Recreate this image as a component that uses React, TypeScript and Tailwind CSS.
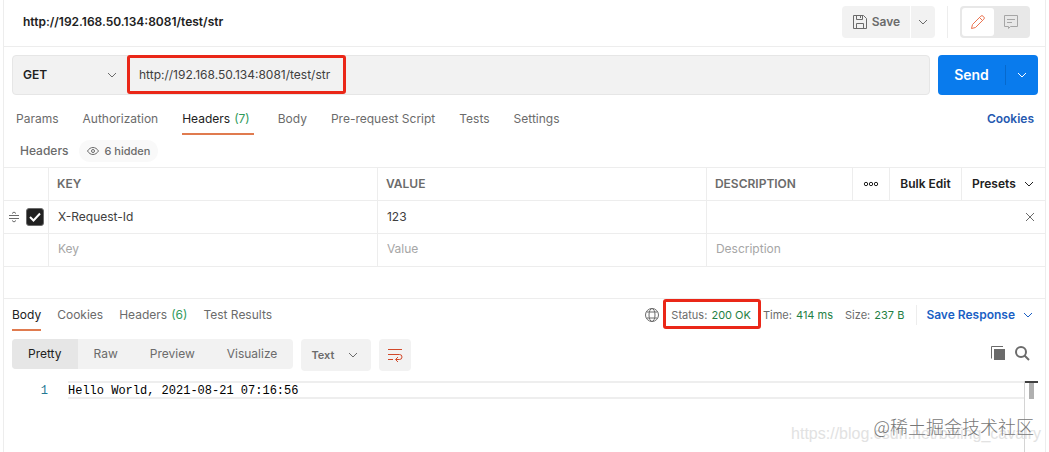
import { useState } from 'react';
import type { ReactNode } from 'react';

type Tab = { label: string; count?: number };

const requestTabs: Tab[] = [
  { label: 'Params' },
  { label: 'Authorization' },
  { label: 'Headers', count: 7 },
  { label: 'Body' },
  { label: 'Pre-request Script' },
  { label: 'Tests' },
  { label: 'Settings' },
];

const responseTabs: Tab[] = [
  { label: 'Body' },
  { label: 'Cookies' },
  { label: 'Headers', count: 6 },
  { label: 'Test Results' },
];

const viewModes = ['Pretty', 'Raw', 'Preview', 'Visualize'];

function Chevron({ className = '' }: { className?: string }) {
  return (
    <svg className={`h-[10px] w-[10px] ${className}`} viewBox="0 0 10 10" fill="none" stroke="currentColor" aria-hidden="true">
      <path d="M1 3l4 4 4-4" />
    </svg>
  );
}

/* Red frame around an element worth pointing at */
function Highlight({ className }: { className: string }) {
  return <div className={`pointer-events-none absolute rounded-[3px] border-3 border-[#ea2718] ${className}`} />;
}

function TabButton({ tab, active, className, onClick }: { tab: Tab; active: boolean; className: string; onClick: () => void }) {
  return (
    <button
      type="button"
      onClick={onClick}
      className={`border-b-2 whitespace-nowrap ${active ? 'border-[#e07b4f] text-[#212121]' : 'border-transparent text-[#6b6b6b]'} ${className}`}
    >
      {tab.label}
      {tab.count && <span className="ml-1 text-[#2f9a5b]">({tab.count})</span>}
    </button>
  );
}

function Stat({ label, children }: { label: string; children: ReactNode }) {
  return (
    <span className="whitespace-nowrap text-[#6b6b6b]">
      {label}: <span className="ml-px text-[#1f7f45]">{children}</span>
    </span>
  );
}

export default function App() {
  const [requestTab, setRequestTab] = useState(2);
  const [responseTab, setResponseTab] = useState(0);
  const [mode, setMode] = useState('Pretty');

  return (
    <div className="relative mr-[3px] ml-[3px] min-h-screen overflow-hidden border-x border-[#ededed] bg-white font-[Inter,'Liberation_Sans',sans-serif] text-[12px] leading-5 text-[#212121]">
      {/* Title */}
      <header className="flex h-[47px] items-center border-b border-[#ededed] pr-[15px] pb-[2px] pl-[19px]">
        <h1 className="flex-1 font-semibold">http://192.168.50.134:8081/test/str</h1>
        <div className="flex h-8 gap-px text-[#6b6b6b]">
          <button type="button" className="flex w-[68px] items-center justify-center gap-1 rounded-l bg-[#f2f2f2] font-semibold">
            <svg className="h-4 w-4" viewBox="0 0 16 16" fill="none" stroke="currentColor" aria-hidden="true">
              <path d="M1.5 1.5h10l3 3v10h-13z" />
              <path d="M4.5 1.5v4h6v-4M8.5 2v2M4.5 14.5v-5h7v5" />
            </svg>
            Save
          </button>
          <button type="button" aria-label="Save options" className="flex w-6 items-center justify-center rounded-r bg-[#f2f2f2]">
            <Chevron />
          </button>
        </div>
        <div className="mx-3 h-8 w-px bg-[#ededed]" />
        <div className="flex h-8 w-[70px] rounded bg-[#e8e8e8] p-[2px]">
          <button type="button" aria-label="Edit" className="flex w-8 items-center justify-center rounded-[3px] bg-white text-[#ec7350]">
            <svg className="h-4 w-4" viewBox="0 0 16 16" fill="none" stroke="currentColor" strokeLinejoin="round" aria-hidden="true">
              <path d="M1.5 14.5l1-4 8.3-8.3a1.6 1.6 0 0 1 2.3 0l.7.7a1.6 1.6 0 0 1 0 2.3L5.5 13.5z" />
              <path d="M9.5 3.5l3 3" />
            </svg>
          </button>
          <button type="button" aria-label="Comments" className="flex flex-1 items-center justify-center text-[#a6a6a6]">
            <svg className="h-4 w-4" viewBox="0 0 16 16" fill="none" stroke="currentColor" aria-hidden="true">
              <path d="M1.5 1.5h13v11h-7l-2 2v-2h-4zM4 5.5h8M4 8.5h5" />
            </svg>
          </button>
        </div>
      </header>

      {/* Method, URL, Send */}
      <div className="relative mt-2 flex h-10 gap-2 pr-[7px] pl-2">
        <div className="flex flex-1 rounded border border-[#e6e6e6] bg-[#f2f2f2]">
          <div className="relative w-[115px]">
            <select aria-label="Method" className="h-full w-full appearance-none pl-[10px] font-semibold outline-none">
              <option>GET</option>
              <option>POST</option>
            </select>
            <Chevron className="pointer-events-none absolute top-[14px] right-[11px] text-[#6b6b6b]" />
          </div>
          <input
            aria-label="Request URL"
            defaultValue="http://192.168.50.134:8081/test/str"
            className="min-w-0 flex-1 pl-[11px] text-[#404040] outline-none"
          />
        </div>
        <div className="flex w-[100px] items-center rounded bg-[#097bed] text-white">
          <button type="button" className="h-full w-[67px] text-[14px] font-semibold">Send</button>
          <div className="h-5 w-px bg-[#0669cd]" />
          <button type="button" aria-label="Send options" className="flex h-full flex-1 items-center justify-center">
            <Chevron />
          </button>
        </div>
        <Highlight className="top-0 left-[123px] h-[39px] w-[219px]" />
      </div>

      {/* Request tabs */}
      <nav className="flex h-10 items-stretch gap-6 pr-[11px] pl-3">
        {requestTabs.map((tab, i) => (
          <TabButton
            key={tab.label}
            tab={tab}
            active={i === requestTab}
            className={i === requestTab ? 'pt-3 pr-1 pb-[2px]' : 'pt-3 pb-[2px]'}
            onClick={() => setRequestTab(i)}
          />
        ))}
        <a href="#cookies" className="ml-auto pt-[14px] font-semibold text-[#2559b0]">Cookies</a>
      </nav>

      <div className="flex h-8 items-center gap-[10px] pl-4 font-medium text-[#6b6b6b]">
        <h2>Headers</h2>
        <button type="button" className="flex h-[22px] items-center gap-[6px] rounded-full bg-[#f9f9f9] px-2 text-[11px]">
          <svg className="h-3 w-3" viewBox="0 0 12 12" fill="none" stroke="currentColor" aria-hidden="true">
            <path d="M.5 6C2 3.7 3.8 2.5 6 2.5S10 3.7 11.5 6C10 8.3 8.2 9.5 6 9.5S2 8.3.5 6z" />
            <circle cx="6" cy="6" r="1.5" />
          </svg>
          6 hidden
        </button>
      </div>

      {/* Headers table */}
      <table className="w-full table-fixed border-separate border-spacing-0 border-t border-[#ededed] text-left [&_td]:h-[33px] [&_td]:border-b [&_td]:border-[#ededed] [&_td]:p-0 [&_th]:h-[33px] [&_th]:border-b [&_th]:border-[#ededed] [&_th]:p-0">
        <colgroup>
          <col className="w-[45px]" />
          <col className="w-[31.6%]" />
          <col className="w-[31.6%]" />
          <col />
          <col className="w-[37px]" />
          <col className="w-[72px]" />
          <col className="w-[83px]" />
        </colgroup>
        <thead>
          <tr>
            <th className="border-r" />
            <th className="border-r font-semibold text-[#6b6b6b]"><span className="pl-2">KEY</span></th>
            <th className="border-r font-semibold text-[#6b6b6b]"><span className="pl-2">VALUE</span></th>
            <th className="border-r font-semibold text-[#6b6b6b]"><span className="pl-2">DESCRIPTION</span></th>
            <th className="border-r">
              <button type="button" aria-label="Columns" className="flex w-full justify-center">
                <svg className="h-[6px] w-4" viewBox="0 0 16 6" fill="none" stroke="currentColor" aria-hidden="true">
                  <circle cx="3" cy="3" r="1.7" />
                  <circle cx="8" cy="3" r="1.7" />
                  <circle cx="13" cy="3" r="1.7" />
                </svg>
              </button>
            </th>
            <th className="border-r">
              <button type="button" className="w-full font-semibold whitespace-nowrap">Bulk Edit</button>
            </th>
            <th>
              <button type="button" className="flex w-full items-center gap-2 pl-[10px] font-semibold">
                Presets
                <Chevron />
              </button>
            </th>
          </tr>
        </thead>
        <tbody>
          <tr>
            <td className="border-r">
              <div className="flex items-center gap-[7px] pl-[5px]">
                <svg className="h-3 w-[10px] text-[#6b6b6b]" viewBox="0 0 10 12" fill="none" stroke="currentColor" aria-hidden="true">
                  <path d="M0 4.5h10M0 7.5h10M3 2.5l2-1.5 2 1.5M3 9.5l2 1.5 2-1.5" />
                </svg>
                <span className="relative flex h-[18px] w-[18px]">
                  <input
                    type="checkbox"
                    defaultChecked
                    aria-label="Enable X-Request-Id"
                    className="peer h-full w-full appearance-none rounded-[3px] border border-[#6b6b6b] checked:bg-[#212121]"
                  />
                  <svg className="pointer-events-none absolute top-0 left-0 hidden h-[18px] w-[18px] peer-checked:block" viewBox="0 0 18 18" fill="none" stroke="white" strokeWidth="2" aria-hidden="true">
                    <path d="M4 9l3.5 3.5L14 5.5" />
                  </svg>
                </span>
              </div>
            </td>
            <td className="border-r">
              <input aria-label="Key" defaultValue="X-Request-Id" className="w-full pl-[9px] text-[#404040] outline-none" />
            </td>
            <td className="border-r">
              <input aria-label="Value" defaultValue="123" className="w-full pl-[9px] text-[#404040] outline-none" />
            </td>
            <td colSpan={4}>
              <div className="flex items-center pr-[10px]">
                <input aria-label="Description" className="min-w-0 flex-1 pl-[9px] outline-none" />
                <button type="button" aria-label="Remove header" className="text-[#6b6b6b]">
                  <svg className="h-[10px] w-[10px]" viewBox="0 0 10 10" fill="none" stroke="currentColor" aria-hidden="true">
                    <path d="M1 1l8 8M9 1L1 9" />
                  </svg>
                </button>
              </div>
            </td>
          </tr>
          <tr>
            <td className="border-r" />
            <td className="border-r">
              <input aria-label="New key" placeholder="Key" className="w-full pb-[2px] pl-[9px] outline-none placeholder:text-[#a6a6a6]" />
            </td>
            <td className="border-r">
              <input aria-label="New value" placeholder="Value" className="w-full pb-[2px] pl-[9px] outline-none placeholder:text-[#a6a6a6]" />
            </td>
            <td colSpan={4}>
              <input aria-label="New description" placeholder="Description" className="w-full pb-[2px] pl-[9px] outline-none placeholder:text-[#a6a6a6]" />
            </td>
          </tr>
        </tbody>
      </table>

      {/* Response */}
      <section className="mt-[31px] border-t border-[#ededed]">
        <div className="flex h-8 items-stretch pr-3 pl-2">
          <nav className="flex gap-4">
            {responseTabs.map((tab, i) => (
              <TabButton key={tab.label} tab={tab} active={i === responseTab} className="pt-[2px]" onClick={() => setResponseTab(i)} />
            ))}
          </nav>
          <div className="ml-auto flex items-center gap-3 text-[11px]">
            <svg className="h-[14px] w-[14px] text-[#6b6b6b]" viewBox="0 0 14 14" fill="none" stroke="currentColor" aria-hidden="true">
              <circle cx="7" cy="7" r="6.5" />
              <ellipse cx="7" cy="7" rx="3" ry="6.5" />
              <path d="M1.5 4h11M1.5 10h11" />
            </svg>
            <span className="relative">
              <Stat label="Status">200 OK</Stat>
              <Highlight className="-top-[6px] -right-[10px] -left-2 h-[30px]" />
            </span>
            <Stat label="Time">414 ms</Stat>
            <Stat label="Size">237 B</Stat>
            <div className="flex items-center gap-[9px]">
              <div className="h-5 w-px bg-[#ededed]" />
              <button type="button" className="flex items-center gap-2 text-[12px] font-semibold whitespace-nowrap text-[#1a5fc4]">
                Save Response
                <Chevron />
              </button>
            </div>
          </div>
        </div>

        <div className="mt-2 flex h-8 items-start gap-2 pr-[15px] pl-2">
          <div className="flex h-[30px] overflow-hidden rounded bg-[#f2f2f2]">
            {viewModes.map((m) => (
              <button
                key={m}
                type="button"
                onClick={() => setMode(m)}
                className={`px-4 ${m === mode ? 'bg-[#e6e6e6] text-[#212121]' : 'text-[#6b6b6b]'}`}
              >
                {m}
              </button>
            ))}
          </div>
          <div className="relative h-8 w-[70px] rounded bg-[#f2f2f2] text-[#6b6b6b]">
            <select aria-label="Format" className="h-full w-full appearance-none pl-[10px] text-[11px] font-semibold outline-none">
              <option>Text</option>
              <option>JSON</option>
            </select>
            <Chevron className="pointer-events-none absolute top-[11px] right-[13px]" />
          </div>
          <button type="button" aria-label="Wrap lines" className="flex h-8 w-8 items-center justify-center rounded bg-[#f2f2f2] text-[#d2492a]">
            <svg className="h-4 w-4" viewBox="0 0 16 16" fill="none" stroke="currentColor" aria-hidden="true">
              <path d="M1 2.5h14M1 7.5h11.5a2.5 2.5 0 0 1 0 5H9M1 12.5h5M11 10l-2.5 2.5L11 15" />
            </svg>
          </button>
          <div className="ml-auto flex gap-2 pt-[6px] text-[#6b6b6b]">
            <button type="button" aria-label="Copy">
              <svg className="h-4 w-4" viewBox="0 0 16 16" aria-hidden="true">
                <path d="M4 4h11v11H4z" fill="currentColor" />
                <path d="M1.5 13.5V1.5H13" fill="none" stroke="currentColor" />
              </svg>
            </button>
            <button type="button" aria-label="Search">
              <svg className="h-4 w-4" viewBox="0 0 16 16" fill="none" stroke="currentColor" strokeWidth="2" aria-hidden="true">
                <circle cx="7" cy="7" r="5" />
                <path d="M10.5 10.5L15 15" />
              </svg>
            </button>
          </div>
        </div>

        {/* Response body */}
        <div className="mt-[10px] flex h-[71px] pr-[7px] font-['Liberation_Mono',monospace] text-[12px] leading-4">
          <div className="w-11 pt-[2px] text-right text-[#237893]">1</div>
          <pre className="ml-5 h-[18px] flex-1 border-y-2 border-[#eeeeee] font-[inherit] text-black">Hello World, 2021-08-21 07:16:56</pre>
          <div className="w-[14px] border-l border-[#d4d4d4]">
            <div className="h-[18px] border-t-2 border-[#404040]">
              <div className="mx-auto h-4 w-[5px] bg-[#b0b0b0]" />
            </div>
          </div>
        </div>
      </section>

      {/* Watermarks */}
      <div className="pointer-events-none absolute right-1 bottom-2 font-['Liberation_Sans',sans-serif] text-[16px] whitespace-nowrap text-[#e2e2e2]">
        https://blog.csdn.net/boling_cavalry
      </div>
      <div className="pointer-events-none absolute right-[11px] bottom-4 font-['Noto_Sans_CJK_SC',sans-serif] text-[18px] font-light whitespace-nowrap text-[#777777]">
        @稀土掘金技术社区
      </div>
    </div>
  );
}
